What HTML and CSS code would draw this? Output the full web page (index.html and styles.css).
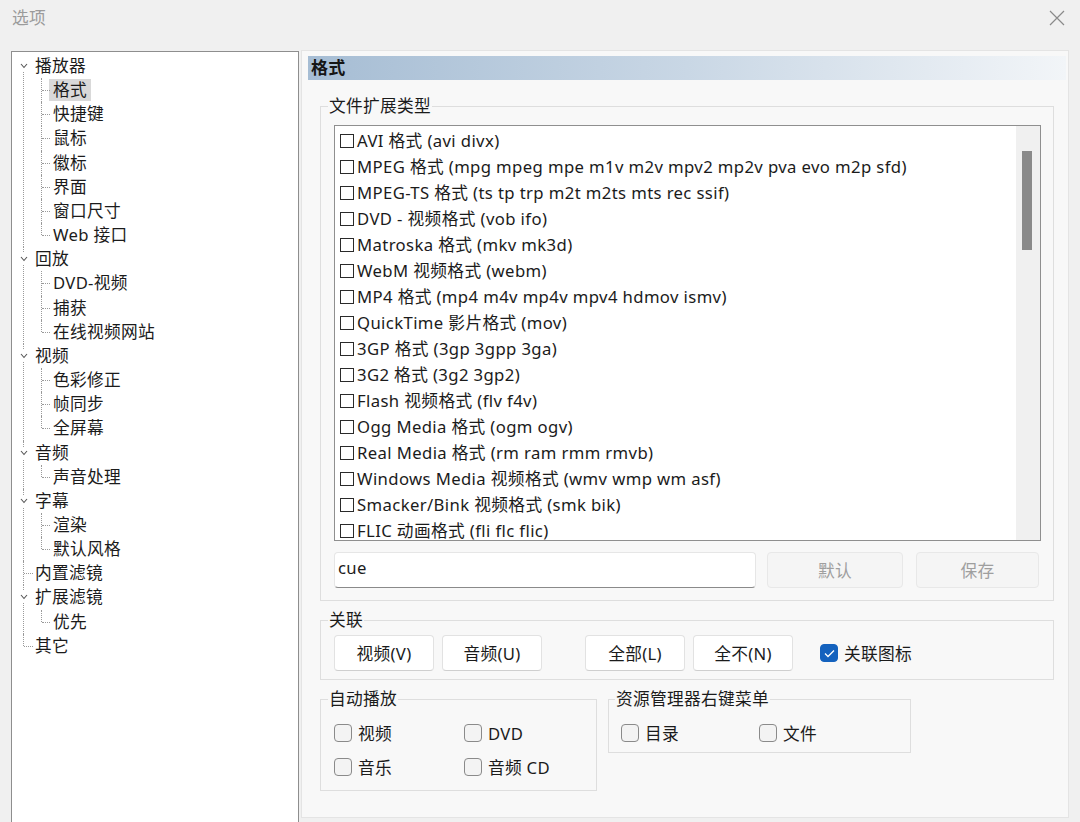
FILE: index.html
```html
<!DOCTYPE html>
<html lang="zh-CN">
<head>
    <meta charset="UTF-8">
    <title>选项</title>
    <link rel="stylesheet" href="styles.css">
</head>
<body>
    <div class="window">
        <div class="titlebar">
            <span class="title">选项</span>
            <svg class="close" width="16" height="16" viewBox="0 0 16 16">
                <path d="M1 1 L15 15 M15 1 L1 15" stroke="#8a8a8a" stroke-width="1.2" fill="none"/>
            </svg>
        </div>

        <div class="main">
            <!-- page tree -->
            <div class="tree-panel">
                <ul class="tree">
                    <li class="top open">
                        <div class="row"><span class="twisty"><svg width="8" height="6" viewBox="0 0 8 6"><path d="M1 1 L4 4.5 L7 1" stroke="#555" stroke-width="1.1" fill="none"/></svg></span>播放器</div>
                        <ul class="kids">
                            <li><div class="row"><span class="label selected">格式</span></div></li>
                            <li><div class="row"><span class="label">快捷键</span></div></li>
                            <li><div class="row"><span class="label">鼠标</span></div></li>
                            <li><div class="row"><span class="label">徽标</span></div></li>
                            <li><div class="row"><span class="label">界面</span></div></li>
                            <li><div class="row"><span class="label">窗口尺寸</span></div></li>
                            <li><div class="row"><span class="label">Web 接口</span></div></li>
                        </ul>
                    </li>
                    <li class="top open">
                        <div class="row"><span class="twisty"><svg width="8" height="6" viewBox="0 0 8 6"><path d="M1 1 L4 4.5 L7 1" stroke="#555" stroke-width="1.1" fill="none"/></svg></span>回放</div>
                        <ul class="kids">
                            <li><div class="row"><span class="label">DVD-视频</span></div></li>
                            <li><div class="row"><span class="label">捕获</span></div></li>
                            <li><div class="row"><span class="label">在线视频网站</span></div></li>
                        </ul>
                    </li>
                    <li class="top open">
                        <div class="row"><span class="twisty"><svg width="8" height="6" viewBox="0 0 8 6"><path d="M1 1 L4 4.5 L7 1" stroke="#555" stroke-width="1.1" fill="none"/></svg></span>视频</div>
                        <ul class="kids">
                            <li><div class="row"><span class="label">色彩修正</span></div></li>
                            <li><div class="row"><span class="label">帧同步</span></div></li>
                            <li><div class="row"><span class="label">全屏幕</span></div></li>
                        </ul>
                    </li>
                    <li class="top open">
                        <div class="row"><span class="twisty"><svg width="8" height="6" viewBox="0 0 8 6"><path d="M1 1 L4 4.5 L7 1" stroke="#555" stroke-width="1.1" fill="none"/></svg></span>音频</div>
                        <ul class="kids">
                            <li><div class="row"><span class="label">声音处理</span></div></li>
                        </ul>
                    </li>
                    <li class="top open">
                        <div class="row"><span class="twisty"><svg width="8" height="6" viewBox="0 0 8 6"><path d="M1 1 L4 4.5 L7 1" stroke="#555" stroke-width="1.1" fill="none"/></svg></span>字幕</div>
                        <ul class="kids">
                            <li><div class="row"><span class="label">渲染</span></div></li>
                            <li><div class="row"><span class="label">默认风格</span></div></li>
                        </ul>
                    </li>
                    <li class="top leaf">
                        <div class="row">内置滤镜</div>
                    </li>
                    <li class="top open">
                        <div class="row"><span class="twisty"><svg width="8" height="6" viewBox="0 0 8 6"><path d="M1 1 L4 4.5 L7 1" stroke="#555" stroke-width="1.1" fill="none"/></svg></span>扩展滤镜</div>
                        <ul class="kids">
                            <li><div class="row"><span class="label">优先</span></div></li>
                        </ul>
                    </li>
                    <li class="top leaf">
                        <div class="row">其它</div>
                    </li>
                </ul>
            </div>

            <!-- page: 格式 -->
            <div class="page">
                <div class="page-header">格式</div>

                <div class="page-body">
                    <fieldset class="group ext-group">
                        <legend>文件扩展类型</legend>
                        <div class="listbox">
                            <ul class="list">
                                <li><span class="box"></span>AVI 格式 (avi divx)</li>
                                <li><span class="box"></span>MPEG 格式 (mpg mpeg mpe m1v m2v mpv2 mp2v pva evo m2p sfd)</li>
                                <li><span class="box"></span>MPEG-TS 格式 (ts tp trp m2t m2ts mts rec ssif)</li>
                                <li><span class="box"></span>DVD - 视频格式 (vob ifo)</li>
                                <li><span class="box"></span>Matroska 格式 (mkv mk3d)</li>
                                <li><span class="box"></span>WebM 视频格式 (webm)</li>
                                <li><span class="box"></span>MP4 格式 (mp4 m4v mp4v mpv4 hdmov ismv)</li>
                                <li><span class="box"></span>QuickTime 影片格式 (mov)</li>
                                <li><span class="box"></span>3GP 格式 (3gp 3gpp 3ga)</li>
                                <li><span class="box"></span>3G2 格式 (3g2 3gp2)</li>
                                <li><span class="box"></span>Flash 视频格式 (flv f4v)</li>
                                <li><span class="box"></span>Ogg Media 格式 (ogm ogv)</li>
                                <li><span class="box"></span>Real Media 格式 (rm ram rmm rmvb)</li>
                                <li><span class="box"></span>Windows Media 视频格式 (wmv wmp wm asf)</li>
                                <li><span class="box"></span>Smacker/Bink 视频格式 (smk bik)</li>
                                <li><span class="box"></span>FLIC 动画格式 (fli flc flic)</li>
                            </ul>
                            <div class="scrollbar"><div class="thumb"></div></div>
                        </div>
                        <div class="ext-row">
                            <div class="textbox">cue</div>
                            <button class="btn btn-default" disabled>默认</button>
                            <button class="btn btn-save" disabled>保存</button>
                        </div>
                    </fieldset>

                    <fieldset class="group assoc-group">
                        <legend>关联</legend>
                        <div class="assoc-row">
                            <button class="btn btn-assoc">视频(V)</button>
                            <button class="btn btn-assoc">音频(U)</button>
                            <button class="btn btn-assoc btn-gap">全部(L)</button>
                            <button class="btn btn-assoc">全不(N)</button>
                            <label class="check assoc-icon"><span class="cb checked"><svg width="11" height="9" viewBox="0 0 11 9"><path d="M1 4.5 L4 7.5 L10 1.5" stroke="#fff" stroke-width="1.3" fill="none"/></svg></span>关联图标</label>
                        </div>
                    </fieldset>

                    <div class="bottom-groups">
                        <fieldset class="group autoplay-group">
                            <legend>自动播放</legend>
                            <div class="check-grid autoplay-grid">
                                <label class="check"><span class="cb"></span>视频</label>
                                <label class="check"><span class="cb"></span>DVD</label>
                                <label class="check"><span class="cb"></span>音乐</label>
                                <label class="check"><span class="cb"></span>音频 CD</label>
                            </div>
                        </fieldset>
                        <fieldset class="group explorer-group">
                            <legend>资源管理器右键菜单</legend>
                            <div class="check-grid explorer-grid">
                                <label class="check"><span class="cb"></span>目录</label>
                                <label class="check"><span class="cb"></span>文件</label>
                            </div>
                        </fieldset>
                    </div>
                </div>
            </div>
        </div>
    </div>
</body>
</html>
```

FILE: styles.css
```css
* {
    box-sizing: border-box;
}
body {
    margin: 0;
    width: 1080px;
    height: 822px;
    overflow: hidden;
    background: #f0f0f0;
    font-family: "Noto Sans", "Noto Sans CJK SC", sans-serif;
    font-size: 16.7px;
    letter-spacing: 0.3px;
    color: #1b1b1b;
}
ul {
    list-style: none;
    margin: 0;
    padding: 0;
}

/* title bar */
.titlebar {
    height: 50px;
    display: flex;
    align-items: flex-start;
    justify-content: space-between;
    padding: 6px 15px 0 12px;
}
.title {
    color: #9b9b9b;
    line-height: 24px;
}
.close {
    margin-top: 4px;
}

.main {
    display: flex;
    align-items: flex-start;
    padding-left: 11px;
    gap: 2px;
}

/* tree */
.tree-panel {
    width: 288px;
    height: 780px;
    margin-top: 1px;
    background: #fff;
    border: 1px solid #8e8e8e;
    padding-top: 2px;
}
.tree li {
    position: relative;
}
.row {
    position: relative;
    height: 24.17px;
    line-height: 24px;
    white-space: nowrap;
}
.top > .row {
    padding-left: 23px;
}
.kids > li > .row {
    padding-left: 41px;
}
/* dotted connectors */
.top::before {
    content: "";
    position: absolute;
    left: 11px;
    top: 0;
    bottom: 0;
    border-left: 1px dotted #9a9a9a;
}
.top:first-child::before {
    top: 12px;
}
.top:last-child::before {
    bottom: auto;
    height: 12px;
}
.leaf > .row::before {
    content: "";
    position: absolute;
    left: 12px;
    top: 12px;
    width: 9px;
    border-top: 1px dotted #9a9a9a;
}
.kids > li::before {
    content: "";
    position: absolute;
    left: 29px;
    top: 0;
    bottom: 0;
    border-left: 1px dotted #9a9a9a;
}
.kids > li:last-child::before {
    bottom: auto;
    height: 12px;
}
.kids > li > .row::before {
    content: "";
    position: absolute;
    left: 30px;
    top: 12px;
    width: 8px;
    border-top: 1px dotted #9a9a9a;
}
.twisty {
    position: absolute;
    left: 8px;
    top: 6px;
    width: 8px;
    height: 12px;
    background: #fff;
    display: flex;
    align-items: center;
}
.label {
    display: inline-block;
    line-height: 22px;
    height: 22px;
    padding: 0 4px;
    margin-left: -4px;
}
.label.selected {
    background: #d9d9d9;
}

/* right page */
.page {
    width: 768px;
    height: 768px;
    background: #f8f8f8;
    border: 1px solid #e4e4e4;
    padding: 5px 2px 0 6px;
}
.page-header {
    height: 24px;
    line-height: 24px;
    padding-left: 3px;
    font-size: 17px;
    font-weight: bold;
    color: #151515;
    background: linear-gradient(to right, #a6bdd4, #c9d7e5 50%, #f2f5f8);
}
.page-body {
    padding: 15px 0 0 12px;
    width: 746px;
}

.group {
    margin: 0;
    border: 1px solid #dedede;
    padding: 0 12px 0 13px;
}
.group legend {
    padding: 0 1px;
    margin-left: -6px;
    line-height: 22px;
}

.ext-group {
    width: 734px;
    padding-top: 8px;
    padding-bottom: 12px;
}
.listbox {
    width: 707px;
    height: 416px;
    background: #fff;
    border: 1px solid #8f8f8f;
    display: flex;
    overflow: hidden;
}
.list {
    flex: 1;
    padding: 2px 0 0 5px;
    letter-spacing: 0.38px;
}
.list li {
    height: 26px;
    line-height: 26px;
    display: flex;
    align-items: center;
    white-space: nowrap;
}
.box {
    width: 14px;
    height: 14px;
    border: 1.5px solid #2a2a2a;
    margin-right: 3px;
    flex: none;
}
.scrollbar {
    width: 24px;
    background: #f0f0f0;
    padding: 25px 0 0 6px;
}
.thumb {
    width: 10px;
    height: 99px;
    background: #8a8a8a;
}

.ext-row {
    display: flex;
    margin-top: 11px;
}
.textbox {
    width: 422px;
    height: 36px;
    background: #fff;
    border: 1px solid #e6e6e6;
    border-bottom: 1px solid #8a8a8a;
    border-radius: 4px;
    padding-left: 3px;
    line-height: 30px;
}
.btn {
    font-family: inherit;
    font-size: inherit;
    letter-spacing: inherit;
    height: 36px;
    border-radius: 4px;
    background: #fff;
    border: 1px solid #e2e2e2;
    border-bottom-color: #cfcfcf;
    color: #1b1b1b;
    padding: 0;
}
.btn:disabled {
    background: #f5f5f5;
    border-color: #e8e8e8;
    color: #9f9f9f;
}
.btn-default {
    width: 136px;
    margin-left: 11px;
}
.btn-save {
    width: 123px;
    margin-left: 13px;
}

.assoc-group {
    width: 734px;
    margin-top: 8px;
    padding-top: 4px;
    padding-bottom: 8px;
}
.assoc-row {
    display: flex;
    align-items: center;
}
.btn-assoc {
    width: 100px;
    margin-right: 8px;
}
.btn-gap {
    margin-left: 35px;
}
.assoc-icon {
    margin-left: 19px;
}

.check {
    display: flex;
    align-items: center;
    height: 34px;
    white-space: nowrap;
}
.cb {
    width: 18px;
    height: 18px;
    border: 1px solid #8a8a8a;
    border-radius: 4px;
    background: #f3f3f3;
    margin-right: 6px;
    display: flex;
    align-items: center;
    justify-content: center;
}
.cb.checked {
    background: #1462be;
    border-color: #1462be;
}

.bottom-groups {
    display: flex;
    align-items: flex-start;
    gap: 11px;
    margin-top: 8px;
}
.autoplay-group {
    width: 277px;
    padding: 6px 0 6px 13px;
}
.explorer-group {
    width: 303px;
    padding: 6px 0 2px 12px;
}
.check-grid {
    display: grid;
}
.autoplay-grid {
    grid-template-columns: 130px 110px;
}
.explorer-grid {
    grid-template-columns: 138px 100px;
}
```
